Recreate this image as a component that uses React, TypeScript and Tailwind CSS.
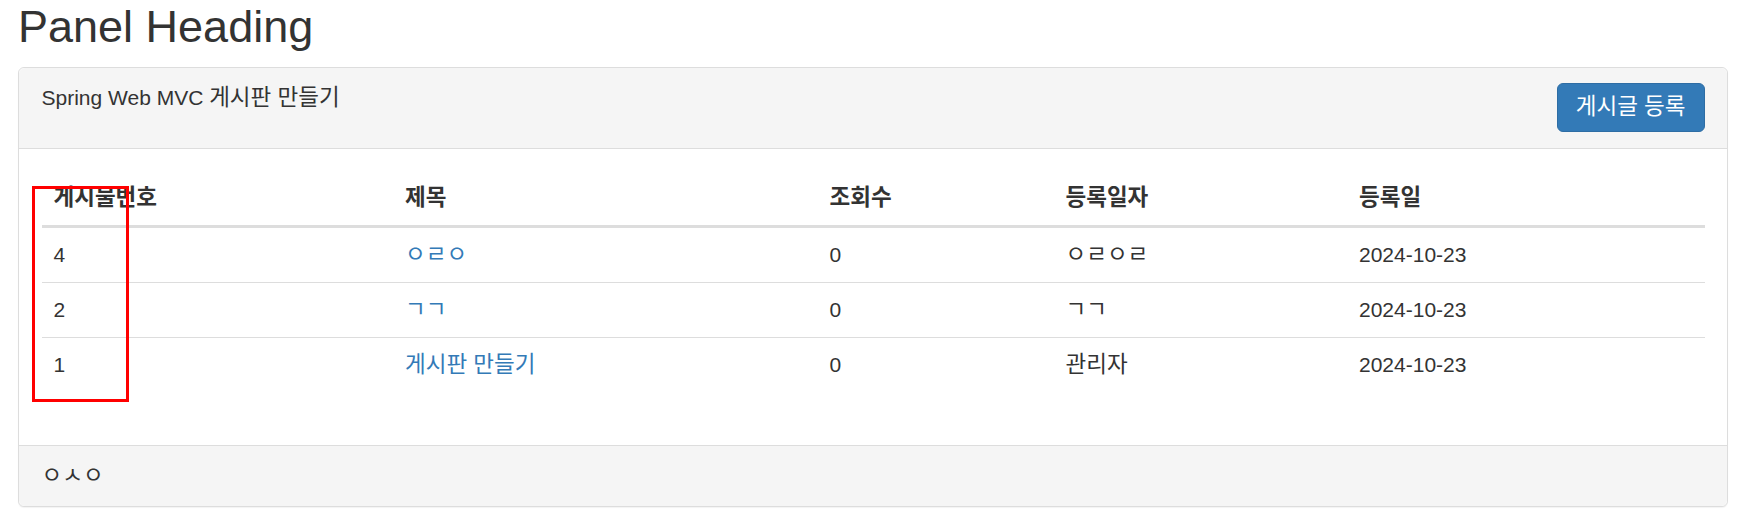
import type { ReactNode } from 'react'

interface Post { id: number; title: string; views: number; writer: string; date: string }

const posts: Post[] = [
  { id: 4, title: 'ㅇㄹㅇ', views: 0, writer: 'ㅇㄹㅇㄹ', date: '2024-10-23' },
  { id: 2, title: 'ㄱㄱ', views: 0, writer: 'ㄱㄱ', date: '2024-10-23' },
  { id: 1, title: '게시판 만들기', views: 0, writer: '관리자', date: '2024-10-23' },
]

const font = "font-['Liberation_Sans','Noto_Sans_CJK_KR',sans-serif]"

// hangul runs a bit bigger, like the Korean system font in the screenshot
function K({ children }: { children: ReactNode }) {
  return <span className="text-[22.5px] leading-[30px]">{children}</span>
}

export default function App() {
  return (
    <div className={`relative min-h-[509px] bg-white pl-[18px] pr-[19px] text-[#333] ${font}`}>
      <h1 className="pt-[2px] mb-[15px] text-[45px] leading-[49.5px] font-normal">Panel Heading</h1>

      <div className="border border-[#ddd] rounded-[6px] bg-white shadow-[0_1px_1px_rgba(0,0,0,0.05)]">
        {/* Heading */}
        <div className="flex justify-between items-start bg-[#f5f5f5] border-b border-[#ddd] rounded-t-[6px] pl-[22.5px] pr-[22.5px] pt-[15px] pb-[16px]">
          <span className="text-[21px] leading-[30px]">Spring Web MVC <K>게시판 만들기</K></span>
          <button className="h-[49px] px-[18px] rounded-[6px] bg-[#337ab7] border border-[#2e6da4] text-white text-[21px] leading-[30px]">
            <K>게시글 등록</K>
          </button>
        </div>

        {/* Body */}
        <div className="p-[22.5px]">
          <table className="w-full table-fixed border-collapse text-[21px] leading-[30px]">
            <thead>
              <tr className="border-b-[3px] border-[#ddd]">
                <th className="w-[351.5px] px-[12px] py-[12px] text-left font-bold"><K>게시물번호</K></th>
                <th className="w-[424.5px] px-[12px] py-[12px] text-left font-bold"><K>제목</K></th>
                <th className="w-[236px] px-[12px] py-[12px] text-left font-bold"><K>조회수</K></th>
                <th className="w-[293.5px] px-[12px] py-[12px] text-left font-bold"><K>등록일자</K></th>
                <th className="px-[12px] py-[12px] text-left font-bold"><K>등록일</K></th>
              </tr>
            </thead>
            <tbody>
              {posts.map((p, i) => (
                <tr key={p.id} className={i > 0 ? 'border-t border-[#ddd]' : ''}>
                  <td className="px-[12px] py-[12px]">{p.id}</td>
                  <td className="px-[12px] py-[12px]">
                    <a href="#" className="text-[#337ab7]"><K>{p.title}</K></a>
                  </td>
                  <td className="px-[12px] py-[12px]">{p.views}</td>
                  <td className="px-[12px] py-[12px]"><K>{p.writer}</K></td>
                  <td className="px-[12px] py-[12px]">{p.date}</td>
                </tr>
              ))}
            </tbody>
          </table>
          <div className="h-[30px]" />
        </div>

        {/* Footer */}
        <div className="bg-[#f5f5f5] border-t border-[#ddd] rounded-b-[6px] px-[22.5px] py-[15px] text-[21px] leading-[30px]">
          <K>ㅇㅅㅇ</K>
        </div>
      </div>

      {/* highlight box */}
      <div className="absolute left-[32px] top-[186px] w-[97px] h-[216px] border-[3px] border-[#ff0000]" />
    </div>
  )
}
